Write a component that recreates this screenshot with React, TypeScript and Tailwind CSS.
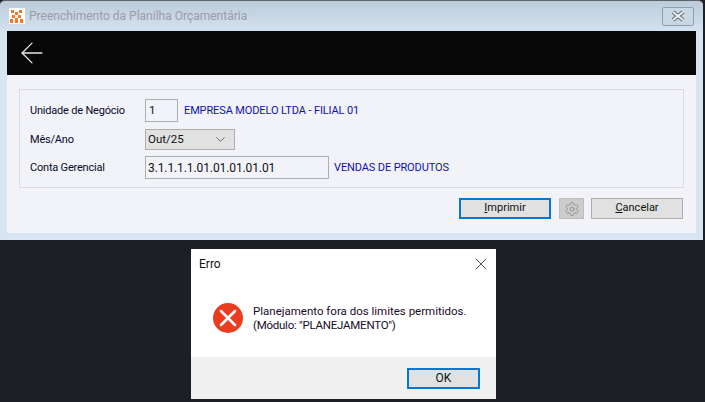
import React from "react";
import { ArrowLeft, ChevronDown, Settings, X } from "lucide-react";

function Logo() {
  return (
    <span className="flex h-[16px] w-[16px] items-center justify-center bg-white">
      <svg width="14" height="14" viewBox="0 0 14 14" fill="#f07a2a">
        <rect x="1" y="1" width="3" height="3" />
        <rect x="9" y="1" width="3" height="3" />
        <rect x="5" y="3" width="3" height="3" />
        <rect x="2" y="6" width="3" height="3" />
        <rect x="8" y="6" width="3" height="3" />
        <rect x="0" y="10" width="3" height="4" />
        <rect x="5" y="9" width="3" height="5" />
        <rect x="10" y="10" width="3" height="4" />
      </svg>
    </span>
  );
}

function CloseGlyph() {
  return (
    <svg width="16" height="12" viewBox="0 0 16 12" fill="none">
      <path d="M3 2 L13 10 M13 2 L3 10" stroke="#5d6670" strokeWidth="4" />
      <path d="M3 2 L13 10 M13 2 L3 10" stroke="#eef2f6" strokeWidth="2" />
    </svg>
  );
}

function Label({ children }: { children: React.ReactNode }) {
  return <span className="w-[125px] shrink-0 whitespace-nowrap pl-[10px] pt-[1px] text-[11px] tracking-[-0.2px] text-[#0a0a28]">{children}</span>;
}

export default function App() {
  return (
    <div className="h-[402px] w-[705px] overflow-hidden bg-[#1c1f23] font-['Roboto',sans-serif]">
      <div className="h-[240px] w-[703px] rounded-t-[5px] border-t border-[#5f6468] bg-[#d7e5f3] bg-gradient-to-b from-[#bccbd9] from-0% to-[#d7e5f3] to-[14%]">
        <div className="flex h-[30px] items-center pl-[9px] pr-[9px]">
          <Logo />
          <span className="ml-[4px] whitespace-nowrap text-[12px] text-[#9a9ca6]">Preenchimento da Planilha Orçamentária</span>
          <span className="ml-auto flex h-[19px] w-[32px] items-center justify-center rounded-[2px] border border-[#8f9fb2] bg-[#c9d7e5]">
            <CloseGlyph />
          </span>
        </div>
        <div className="ml-[7px] h-[202px] w-[689px] bg-[#f1f3f9]">
          <div className="flex h-[44px] items-center bg-[#070707] pl-[8px]">
            <ArrowLeft size={34} strokeWidth={0.9} className="text-[#e8e8e8]" />
          </div>
          <div className="pl-[12px] pr-[12px] pt-[14px]">
            <div className="h-[99px] border border-[#dcdcdf] pt-[9px]">
              <div className="flex h-[23px] items-center">
                <Label>Unidade de Negócio</Label>
                <span className="flex h-[23px] w-[33px] items-center border border-[#aeaeae] pl-[3px] pt-[1px] text-[11.5px] text-[#111]">1</span>
                <span className="ml-[6px] whitespace-nowrap pt-[1px] text-[11px] tracking-[-0.12px] text-[#1010b0]">EMPRESA MODELO LTDA - FILIAL 01</span>
              </div>
              <div className="mt-[7px] flex h-[21px] items-center">
                <Label>Mês/Ano</Label>
                <span className="flex h-[21px] w-[90px] items-center justify-between border border-[#aeaeae] bg-[#e1e1e1] pl-[2px] pr-[6px] text-[11.5px] text-[#111]">
                  Out/25
                  <ChevronDown size={15} strokeWidth={1.2} className="text-[#444]" />
                </span>
              </div>
              <div className="mt-[6px] flex h-[23px] items-center">
                <Label>Conta Gerencial</Label>
                <span className="flex h-[23px] w-[184px] items-center border border-[#aeaeae] pl-[2px] text-[12px] tracking-[-0.1px] text-[#111]">3.1.1.1.1.01.01.01.01.01</span>
                <span className="ml-[5px] whitespace-nowrap pt-[1px] text-[11px] tracking-[-0.12px] text-[#1010b0]">VENDAS DE PRODUTOS</span>
              </div>
            </div>
            <div className="mt-[10px] flex justify-end">
              <span className="flex h-[21px] w-[92px] items-center justify-center border-2 border-[#0078d7] bg-[#e1e1e1] text-[11px] text-[#111]">
                <span><span className="underline">I</span>mprimir</span>
              </span>
              <span className="ml-[8px] flex h-[21px] w-[25px] items-center justify-center border border-[#bcbcbc] bg-[#cccccc]">
                <Settings size={16} strokeWidth={1.2} className="text-[#8a8a8a]" />
              </span>
              <span className="ml-[7px] mr-[1px] flex h-[21px] w-[92px] items-center justify-center border border-[#adadad] bg-[#e1e1e1] text-[11px] text-[#111]">
                <span><span className="underline">C</span>ancelar</span>
              </span>
            </div>
          </div>
        </div>
      </div>
      <div className="ml-[191px] mt-[9px] flex h-[150px] w-[305px] flex-col bg-white">
        <div className="flex h-[30px] items-center justify-between pl-[8px] pr-[5px]">
          <span className="text-[12px] text-[#111]">Erro</span>
          <X size={20} strokeWidth={0.9} className="text-[#111]" />
        </div>
        <div className="flex h-[78px] items-start pl-[22px] pt-[24px]">
          <span className="flex h-[30px] w-[30px] items-center justify-center rounded-full bg-[#ea3c1f]">
            <X size={28} strokeWidth={2.2} className="text-white" />
          </span>
          <div className="ml-[10px] mt-[1px] whitespace-nowrap text-[11.5px] leading-[14px] text-[#1a0a28]">
            <div>Planejamento fora dos limites permitidos.</div>
            <div className="tracking-[-0.25px]">(Módulo: "PLANEJAMENTO")</div>
          </div>
        </div>
        <div className="flex h-[42px] items-center justify-end bg-[#f0f0f0] pr-[16px]">
          <span className="flex h-[21px] w-[73px] items-center justify-center border-2 border-[#0078d7] bg-[#e1e1e1] text-[12px] text-[#111]">OK</span>
        </div>
      </div>
    </div>
  );
}
